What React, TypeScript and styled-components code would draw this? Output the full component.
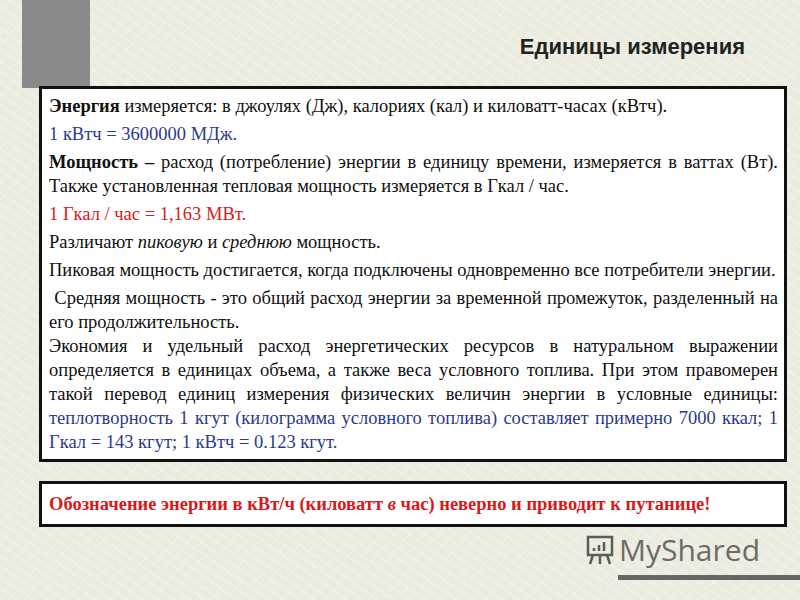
import React from 'react';
import styled, { createGlobalStyle } from 'styled-components';

const GlobalStyle = createGlobalStyle`
  html, body { margin: 0; padding: 0; }
  body {
    width: 800px;
    height: 600px;
    overflow: hidden;
    background-color: #ecebdf;
    background-image:
      repeating-linear-gradient(35deg, rgba(255,255,255,0.25) 0 2px, transparent 2px 9px),
      repeating-linear-gradient(-50deg, rgba(255,255,255,0.18) 0 1px, transparent 1px 11px);
  }
`;

const Slide = styled.div`
  position: relative;
  width: 800px;
  height: 600px;
  box-sizing: border-box;
  padding: 0 13px 0 39px;
  display: flex;
  flex-direction: column;
  font-family: "Liberation Serif", "DejaVu Serif", "Times New Roman", serif;
`;

const SideBar = styled.div`
  position: absolute;
  left: 22px;
  top: 0;
  width: 68px;
  height: 88px;
  background: #8a8a8a;
`;

const Title = styled.h1`
  margin: 34px 42px 0 0;
  height: 52px;
  text-align: right;
  font-family: "Liberation Sans", Arial, sans-serif;
  font-size: 22px;
  font-weight: bold;
  color: #222;
`;

const Box = styled.div`
  position: relative;
  background: #fff;
  border: 3px solid #111;
  padding: 5px 6px 5px 7px;
  color: #111;
  font-size: 18.5px;
  line-height: 24px;
`;

const Para = styled.p<{ $color?: string; $justify?: boolean; $tight?: boolean }>`
  margin: 0 0 ${p => (p.$tight ? '0' : '4px')};
  color: ${p => p.$color || '#111'};
  text-align: ${p => (p.$justify ? 'justify' : 'left')};
  &:last-child { margin-bottom: 0; }
`;

const Blue = styled.span`
  color: #2a3a8c;
`;

const NoteBox = styled(Box)`
  margin-top: 19px;
  padding: 8px 7px;
  color: #d81818;
  font-weight: bold;
`;

const Watermark = styled.div`
  position: absolute;
  right: 40px;
  bottom: 30px;
  display: flex;
  align-items: center;
  gap: 4px;
  font-family: "Open Sans", sans-serif;
  font-size: 30px;
  color: #555;
  opacity: 0.85;
`;

const BottomLine = styled.div`
  position: absolute;
  right: 0;
  bottom: 20px;
  width: 182px;
  height: 5px;
  background: #666;
`;

export default function App() {
  return (
    <>
      <GlobalStyle />
      <Slide>
        <SideBar />
        <Title>Единицы измерения</Title>
        <Box>
          <Para><b>Энергия</b> измеряется: в джоулях (Дж), калориях (кал) и киловатт-часах (кВтч).</Para>
          <Para $color="#2a3a8c">1 кВтч = 3600000 МДж.</Para>
          <Para $justify><b>Мощность –</b> расход (потребление) энергии в единицу времени, измеряется в ваттах (Вт). Также установленная тепловая мощность измеряется в Гкал / час.</Para>
          <Para $color="#d42020">1 Гкал / час = 1,163 МВт.</Para>
          <Para>Различают <i>пиковую</i> и <i>среднюю</i> мощность.</Para>
          <Para $justify>Пиковая мощность достигается, когда подключены одновременно все потребители энергии.</Para>
          <Para $justify $tight>&nbsp;Средняя мощность - это общий расход энергии за временной промежуток, разделенный на его продолжительность.</Para>
          <Para $justify>Экономия и удельный расход энергетических ресурсов в натуральном выражении определяется в единицах объема, а также веса условного топлива. При этом правомерен такой перевод единиц измерения физических величин энергии в условные единицы: <Blue>теплотворность 1 кгут (килограмма условного топлива) составляет примерно 7000 ккал; 1 Гкал = 143 кгут; 1 кВтч = 0.123 кгут.</Blue></Para>
        </Box>
        <NoteBox>Обозначение энергии в кВт/ч (киловатт <i>в</i> час) неверно и приводит к путанице!</NoteBox>
        <Watermark>
          <svg width="30" height="34" viewBox="0 0 30 34" fill="none" stroke="#444" strokeWidth="2.5">
            <rect x="3" y="4" width="24" height="18" />
            <path d="M9 18v-3M14 18v-6M19 18v-9M8 22l-3 9M22 22l3 9M15 22v9" />
          </svg>
          MyShared
        </Watermark>
        <BottomLine />
      </Slide>
    </>
  );
}
